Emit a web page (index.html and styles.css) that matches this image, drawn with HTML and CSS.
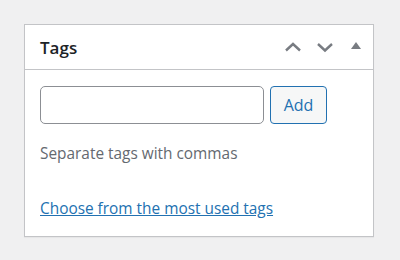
FILE: index.html
```html
<!DOCTYPE html>
<html lang="en">
<head>
  <meta charset="UTF-8" />
  <title>Tags</title>
  <link rel="stylesheet" href="styles.css">
</head>
<body>

  <div class="postbox">
    <div class="postbox-header">
      <h2>Tags</h2>
      <div class="handle-actions">
        <button class="handle-btn" aria-label="Move up">
          <svg width="20" height="20" viewBox="0 0 20 20"><path d="M3 13.5 L10 7 L17 13.5" fill="none" stroke="#787c82" stroke-width="2.4"/></svg>
        </button>
        <button class="handle-btn" aria-label="Move down">
          <svg width="20" height="20" viewBox="0 0 20 20"><path d="M3 7 L10 13.5 L17 7" fill="none" stroke="#787c82" stroke-width="2.4"/></svg>
        </button>
        <button class="handle-btn toggle" aria-label="Toggle panel">
          <svg width="12" height="10" viewBox="0 0 12 10"><path d="M1 9 L6 2 L11 9 Z" fill="#787c82"/></svg>
        </button>
      </div>
    </div>

    <div class="inside">
      <div class="tag-add">
        <input type="text" class="new-tag" />
        <button class="add-btn">Add</button>
      </div>
      <p class="howto">Separate tags with commas</p>
      <a href="#" class="tag-cloud-link">Choose from the most used tags</a>
    </div>
  </div>

</body>
</html>
```

FILE: styles.css
```css
* {
  box-sizing: border-box;
  margin: 0;
  padding: 0;
}

body {
  background: #f0f0f1;
  padding: 24px;
  font-family: 'Open Sans', sans-serif;
}

.postbox {
  width: 350px;
  height: 213px;
  background: #fff;
  border: 1px solid #c3c4c7;
  box-shadow: 0 1px 1px rgba(0, 0, 0, 0.04);
}

.postbox-header {
  height: 45px;
  display: flex;
  align-items: center;
  justify-content: space-between;
  border-bottom: 1px solid #c3c4c7;
  padding-left: 15px;
}

.postbox-header h2 {
  font-size: 17px;
  font-weight: 600;
  color: #1d2327;
}

.handle-actions {
  display: flex;
  align-items: center;
  padding-right: 2px;
}

.handle-btn {
  width: 32px;
  height: 44px;
  border: none;
  background: none;
  display: flex;
  align-items: center;
  justify-content: center;
  cursor: pointer;
}

.handle-btn.toggle {
  width: 30px;
  padding-bottom: 4px;
}

.inside {
  padding: 16px 15px 0;
}

.tag-add {
  display: flex;
  gap: 6px;
}

.new-tag {
  width: 224px;
  height: 38px;
  border: 1px solid #8c8f94;
  border-radius: 5px;
  font-family: inherit;
  font-size: 16px;
  padding: 0 10px;
}

.add-btn {
  width: 57px;
  height: 38px;
  border: 1px solid #2271b1;
  border-radius: 4px;
  background: #f6f7f7;
  color: #2271b1;
  font-family: inherit;
  font-size: 16px;
  cursor: pointer;
}

.howto {
  margin-top: 19px;
  font-size: 15.4px;
  color: #646970;
}

.tag-cloud-link {
  display: inline-block;
  margin-top: 34px;
  font-size: 15.4px;
  color: #2271b1;
}
```
